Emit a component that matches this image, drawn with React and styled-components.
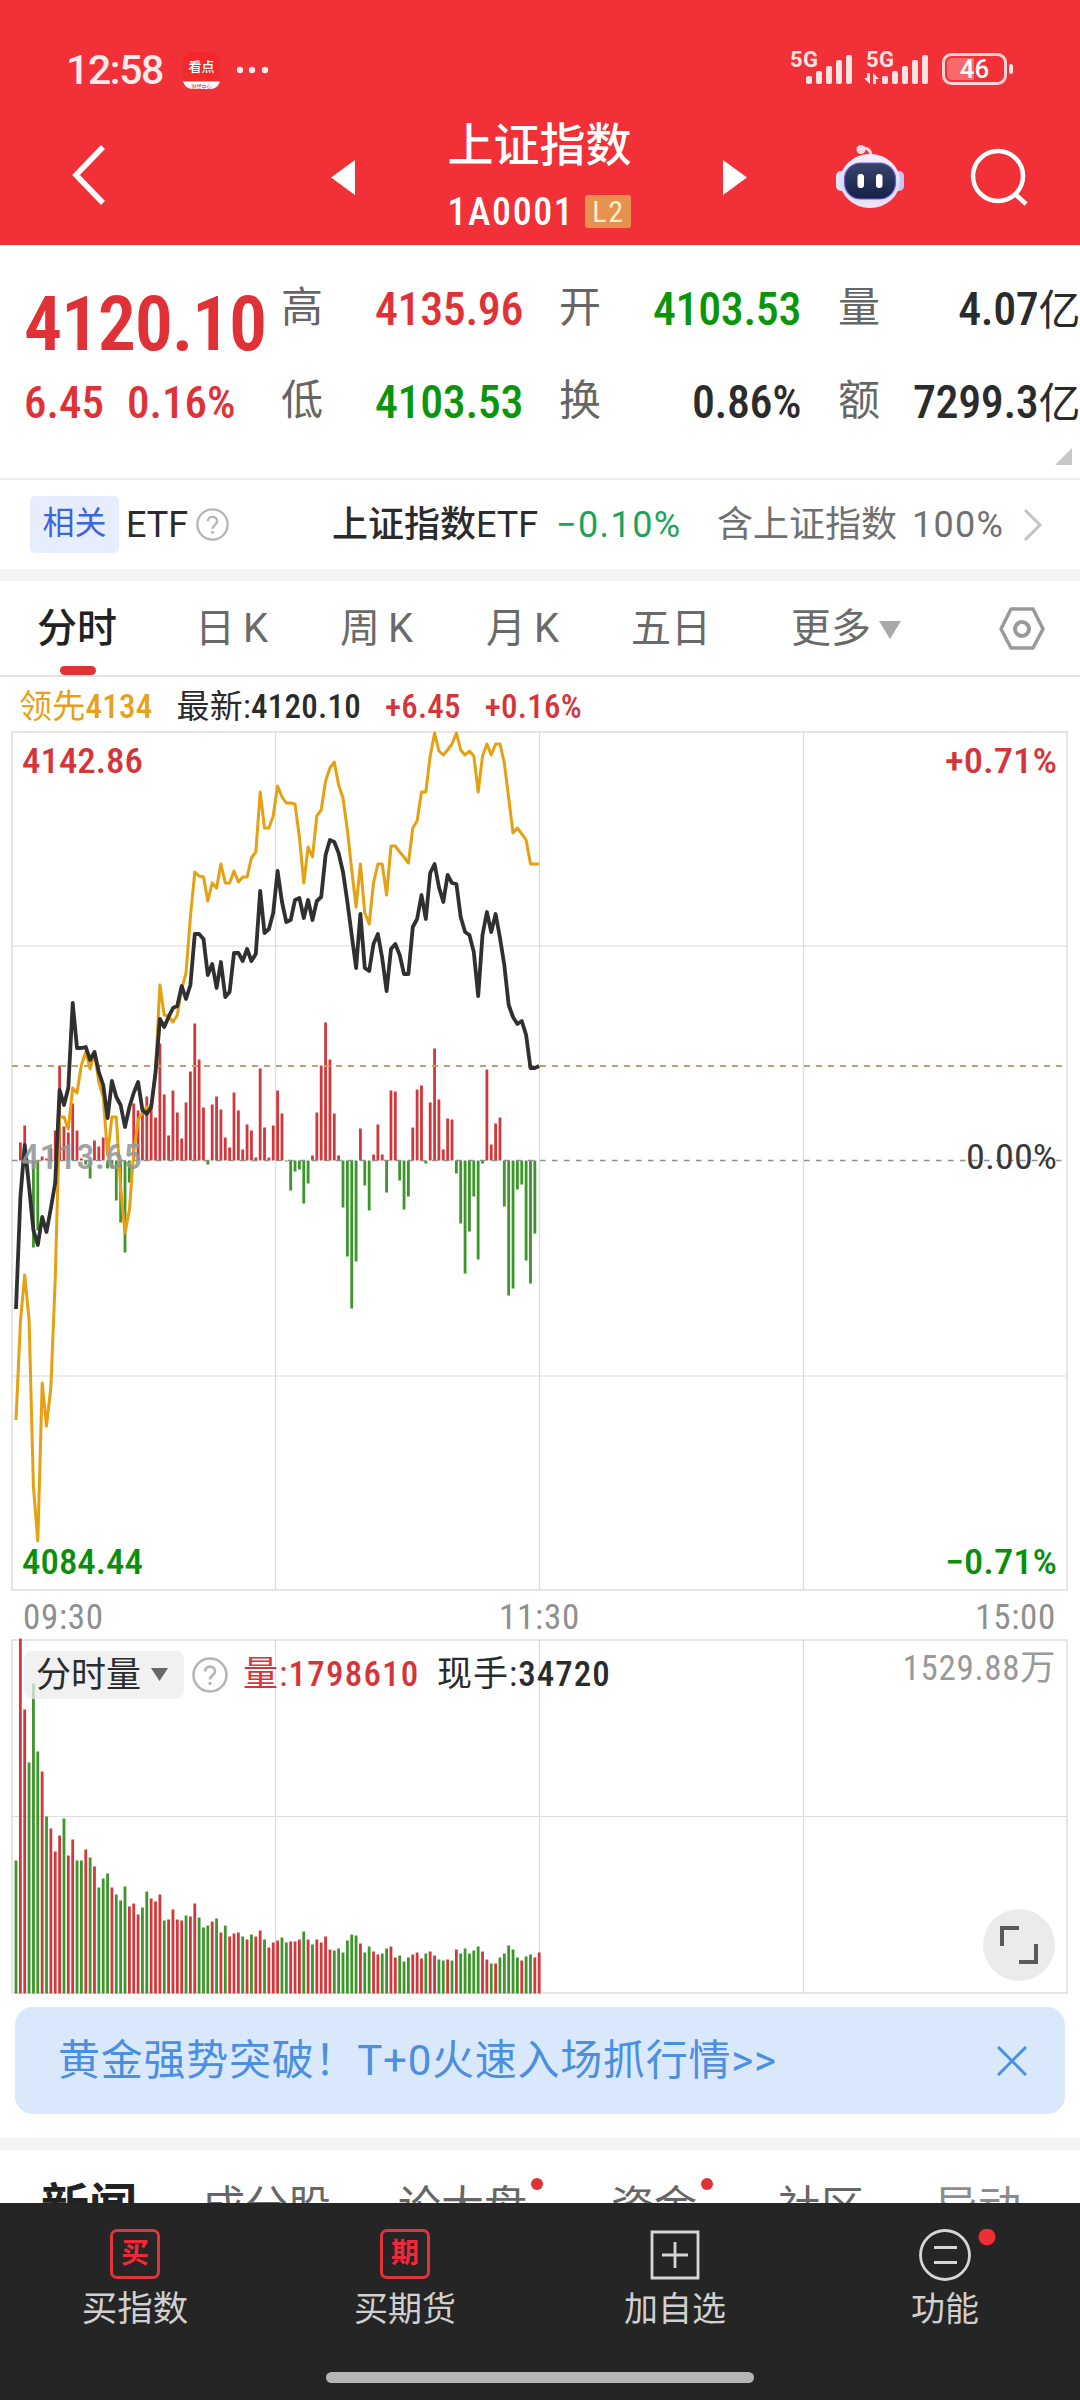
import React from "react";
import styled, { createGlobalStyle } from "styled-components";

const numFont = `"Roboto Condensed", Roboto, "Noto Sans CJK SC", sans-serif`;
const textFont = `Roboto, "Noto Sans CJK SC", sans-serif`;

const red = "#e03236";
const green = "#0a950a";

const GlobalStyle = createGlobalStyle`
  * {
    box-sizing: border-box;
  }
  body {
    margin: 0;
    background: #fff;
    font-family: ${textFont};
    color: #2b2b2b;
  }
  svg {
    display: block;
    flex: none;
  }
`;

const Screen = styled.main`
  width: 1080px;
  height: 2400px;
  overflow: hidden;
  display: flex;
  flex-direction: column;
  background: #fff;
  white-space: nowrap;
`;

/* ---------- top ---------- */

const StatusBar = styled.div`
  flex: none;
  height: 100px;
  padding: 41px 66px 0 66px;
  display: flex;
  align-items: flex-start;
  background: #f13037;
  color: #ffe9e9;
`;

const Clock = styled.span`
  width: 117px;
  font-size: 41px;
  font-weight: 500;
  line-height: 58px;
  letter-spacing: -1.4px;
`;

const AppBadge = styled.div`
  width: 37px;
  height: 37px;
  margin-top: 11px;
  border-radius: 9px;
  overflow: hidden;
  background: linear-gradient(#f5262c, #ee2f2c);
  display: flex;
  flex-direction: column;
  text-align: center;
  color: #fff;
  b {
    flex: 1;
    font-size: 13px;
    font-weight: 500;
    line-height: 29px;
  }
  small {
    height: 10px;
    border-top: 1px solid #f7b45a;
    background: #fff;
    color: #c33;
    font-size: 5px;
    line-height: 8px;
  }
`;

const StatusRight = styled.div`
  margin-left: auto;
`;

const NavBar = styled.header`
  flex: none;
  height: 145px;
  display: flex;
  align-items: flex-start;
  background: #f13037;
  color: #fff;
  padding-left: 70px;
`;

const NavIcon = styled.div`
  width: ${p => p.$w}px;
  padding-top: ${p => p.$top}px;
`;

const Title = styled.div`
  width: 339px;
  margin-right: 1px;
  text-align: center;
  h1 {
    margin: 15px 0 0;
    font-size: 46px;
    font-weight: 500;
    line-height: 60px;
  }
`;

const Code = styled.div`
  display: flex;
  justify-content: center;
  align-items: center;
  height: 73px;
  font-family: ${numFont};
  font-size: 38px;
  font-weight: 500;
  letter-spacing: 1.6px;
`;

const Level = styled.span`
  width: 46px;
  height: 33px;
  margin-left: 11px;
  border-radius: 3px;
  background: #e6914d;
  color: #fdf0c8;
  font-size: 30px;
  font-weight: 400;
  line-height: 34px;
  text-align: center;
`;

/* ---------- quote ---------- */

const Quote = styled.section`
  flex: none;
  height: 235px;
  padding-left: 24px;
  display: flex;
  border-bottom: 2px solid #ededed;
  position: relative;
`;

const PriceBox = styled.div`
  width: 257px;
  color: ${red};
  font-family: ${numFont};
`;

const Price = styled.div`
  height: 88px;
  margin-top: 35px;
  font-size: 76px;
  font-weight: 600;
  line-height: 88px;
  letter-spacing: -1.3px;
`;

const Change = styled.div`
  margin-top: 9px;
  height: 52px;
  font-size: 45px;
  font-weight: 500;
  line-height: 52px;
  display: flex;
  gap: 23px;
`;

const StatGrid = styled.dl`
  margin: 17px 0 0;
  display: grid;
  grid-template-columns: 42px 200px 78px 200px 79px 200px;
  grid-template-rows: 93px 93px;
  height: 186px;
  dt {
    font-size: 42px;
    line-height: 91px;
    color: #666;
    text-align: right;
  }
`;

const Stat = styled.dd`
  margin: 0;
  text-align: right;
  font-family: ${numFont};
  font-size: 46px;
  font-weight: 500;
  line-height: 95px;
  height: 93px;
  letter-spacing: -0.4px;
  color: ${p => p.$color || "#2b2b2b"};
  small {
    font-size: 42px;
    line-height: 0;
    font-weight: 400;
  }
`;

const ExpandMark = styled.i`
  position: absolute;
  right: 8px;
  top: 203px;
  border-left: 17px solid transparent;
  border-bottom: 17px solid #c8c8c8;
`;

const EtfRow = styled.div`
  flex: none;
  height: 89px;
  padding: 0 30px 0 30px;
  display: flex;
  align-items: center;
  font-size: 36px;
  line-height: 48px;
`;

const Tag = styled.span`
  width: 89px;
  height: 57px;
  border-radius: 5px;
  background: #e6edfc;
  color: #3b66dd;
  font-size: 32px;
  line-height: 55px;
  text-align: center;
`;

const EtfText = styled.span`
  width: ${p => p.$w}px;
  margin-left: ${p => p.$ml}px;
  color: ${p => p.$color || "#2b2b2b"};
  font-weight: ${p => p.$weight || 400};
  letter-spacing: ${p => p.$ls || 0}px;
  em {
    font-style: normal;
    font-weight: 400;
  }
`;

const Band = styled.div`
  flex: none;
  height: 12px;
  background: #f4f4f4;
`;

/* ---------- chart ---------- */

const Tabs = styled.nav`
  flex: none;
  height: 96px;
  padding-left: 37px;
  display: flex;
  border-bottom: 2px solid #e3e3e3;
`;

const Tab = styled.div`
  width: ${p => p.$w}px;
  height: 94px;
  display: flex;
  font-size: 40px;
  line-height: 96px;
  color: ${p => (p.$active ? "#222" : "#6a6a6a")};
  font-weight: ${p => (p.$active ? 500 : 400)};
  position: relative;
  span {
    margin-left: 8px;
  }
  &::after {
    content: "";
    display: ${p => (p.$active ? "block" : "none")};
    position: absolute;
    left: 23px;
    bottom: 0;
    width: 36px;
    height: 9px;
    border-radius: 5px;
    background: ${red};
  }
`;

const Legend = styled.div`
  flex: none;
  height: 53px;
  padding-left: 19px;
  display: flex;
  gap: 24px;
  font-family: ${numFont};
  font-size: 33px;
  font-weight: 500;
  line-height: 59px;
  letter-spacing: 0.25px;
`;

const Tone = styled.span`
  color: ${p => p.$color || "#2b2b2b"};
  b {
    font-weight: 400;
  }
`;

const AxisRow = styled.div`
  flex: none;
  height: 40px;
  padding: 0 24px 0 23px;
  display: flex;
  justify-content: space-between;
  font-family: ${numFont};
  font-size: 35px;
  line-height: 43px;
  letter-spacing: 0.7px;
  color: #8f8f8f;
`;

const VolumePanel = styled.section`
  flex: none;
  height: 361px;
  position: relative;
`;

const VolumeTools = styled.div`
  position: absolute;
  inset: 15px 24px auto 24px;
  height: 48px;
  display: flex;
  align-items: center;
  font-family: ${numFont};
  font-size: 35px;
`;

const Picker = styled.div`
  width: 160px;
  height: 48px;
  padding-left: 12px;
  display: flex;
  align-items: center;
  gap: 9px;
  border-radius: 8px;
  background: rgba(236, 236, 236, 0.75);
  margin-right: 8px;
  line-height: 47px;
`;

const VolumeText = styled.span`
  width: ${p => p.$w}px;
  margin-left: ${p => p.$ml}px;
  color: ${p => p.$color || "#2b2b2b"};
  height: 48px;
  line-height: 47px;
  font-weight: 500;
  letter-spacing: ${p => p.$ls}px;
  b {
    font-weight: 400;
  }
`;

const VolumeMax = styled.span`
  height: 48px;
  line-height: 36px;
  margin-left: auto;
  letter-spacing: 0.7px;
  color: #999;
`;

const FullButton = styled.button`
  position: absolute;
  right: 25px;
  bottom: 16px;
  width: 72px;
  height: 72px;
  padding: 0;
  border: 0;
  border-radius: 50%;
  background: #ebebeb;
  display: grid;
  place-items: center;
`;

/* ---------- bottom ---------- */

const Banner = styled.div`
  flex: none;
  height: 107px;
  margin: 10px 15px 24px;
  padding: 0 38px 0 43px;
  display: flex;
  align-items: center;
  justify-content: space-between;
  border-radius: 18px;
  background: #dae8fb;
  color: #4a8fe0;
  font-size: 42px;
  letter-spacing: 0.75px;
  span {
    padding-bottom: 8px;
  }
`;

const NewsTabs = styled.nav`
  flex: none;
  height: 53px;
  overflow: hidden;
  padding-left: 41px;
  display: flex;
`;

const NewsTab = styled.div`
  width: ${p => p.$w}px;
  font-size: ${p => (p.$active ? 48 : 43)}px;
  font-weight: ${p => (p.$active ? 700 : 400)};
  color: ${p => (p.$active ? "#222" : "#666")};
  opacity: ${p => (p.$fade ? 0.75 : 1)};
  line-height: 114px;
  height: 114px;
`;

const Dotted = styled.span`
  display: inline-block;
  position: relative;
  &::after {
    content: "";
    position: absolute;
    right: -16px;
    top: 28px;
    width: 12px;
    height: 12px;
    border-radius: 50%;
    background: ${red};
  }
`;

const BottomBar = styled.footer`
  flex: 1;
  background: #252525;
  color: #d0d0d0;
  display: flex;
  flex-direction: column;
  align-items: center;
`;

const Actions = styled.div`
  width: 1080px;
  height: 169px;
  display: grid;
  grid-template-columns: repeat(4, 1fr);
`;

const Action = styled.div`
  display: flex;
  flex-direction: column;
  align-items: center;
  padding-top: 26px;
  font-size: ${p => p.$size || 34}px;
  line-height: 56px;
`;

const RedGlyph = styled.div`
  width: 50px;
  height: 50px;
  border: 3px solid #e0333a;
  border-radius: 7px;
  color: #f0283a;
  font-size: 28px;
  font-weight: 700;
  line-height: 44px;
  text-align: center;
  margin-bottom: 2px;
`;

const HomeBar = styled.div`
  width: 428px;
  height: 11px;
  border-radius: 6px;
  background: #b5b5b5;
`;

/* ---------- data ---------- */

const STEP = 4.36;
const FIRST_X = 16;
const ZERO_Y = 1160.5;
const VOL_BASE = 1993.5;

const price = [
  1309, 1197, 1145, 1187, 1230, 1245, 1217, 1232, 1208, 1183, 1090, 1105, 1088,
  1003, 1048, 1048, 1047, 1060, 1052, 1072, 1085, 1118, 1081, 1097, 1105, 1127,
  1107, 1093, 1082, 1110, 1114, 1107, 1073, 1019, 1027, 1017, 1008, 1006, 986,
  999, 985, 934, 934, 939, 975, 964, 988, 962, 997, 992, 953, 953, 961, 949,
  961, 954, 891, 933, 929, 913, 871, 902, 922, 920, 900, 898, 918, 900, 920,
  901, 897, 855, 840, 842, 853, 872, 902, 935, 968, 914, 968, 971, 944, 934,
  958, 991, 949, 944, 955, 974, 974, 927, 919, 895, 919, 873, 864, 887, 902,
  875, 883, 884, 917, 932, 935, 952, 996, 935, 912, 932, 914, 938, 965, 1005,
  1017, 1024, 1021, 1035, 1068, 1068, 1066
];

const lead = [
  1420, 1322, 1275, 1320, 1487, 1541, 1383, 1426, 1387, 1280, 1117, 1117, 1129,
  1088, 1093, 1065, 1052, 1069, 1053, 1082, 1097, 1155, 1117, 1117, 1187, 1233,
  1210, 1153, 1120, 1113, 1107, 1108, 1070, 985, 1015, 1016, 1022, 1015, 989,
  973, 917, 872, 876, 877, 901, 883, 888, 864, 883, 883, 871, 882, 877, 877,
  858, 852, 792, 828, 828, 816, 786, 797, 803, 803, 804, 837, 883, 847, 857,
  816, 810, 781, 768, 762, 785, 798, 830, 870, 907, 864, 913, 924, 883, 864,
  864, 895, 846, 846, 852, 857, 863, 828, 821, 792, 792, 756, 733, 751, 755,
  750, 744, 733, 750, 755, 751, 756, 792, 756, 744, 755, 744, 744, 763, 798,
  833, 828, 834, 840, 864, 864, 864
];

const momentum = [
  0, 18, 35, 0, -87, -70, 4, 2, 12, 30, 95, 34, 28, 57, 30, 2, -4, -18, 20, 14,
  23, -8, -8, -40, -62, -92, -22, 57, 50, 52, 64, 57, 43, 117, 66, 25, 70, 48,
  22, 58, 89, 137, 101, 53, -4, 56, 64, 51, 23, 13, 68, 50, 11, 36, 30, 3, 92,
  33, 3, 35, 70, 47, -1, -30, -11, -9, -43, -23, 5, 48, 95, 138, 101, 47, 5,
  -47, -96, -148, -101, 32, -25, -50, 6, 36, 6, -32, 70, 69, -20, -49, -36, 33,
  71, 75, -3, 58, 112, 61, 11, 42, 41, -13, -63, -113, -71, -36, -99, -3, 91,
  16, 37, 43, -46, -135, -128, -29, -24, -100, -123, -73, 0
];

// negative = falling minute
const volume = [
  -133, 355, 284, -231, -310, -242, 222, -177, 165, 142, 158, -175, 138, 154,
  -133, -133, 144, -136, 127, -106, -115, -120, 106, -99, -93, -107, 87, 90, 79,
  -86, -102, 95, 92, 99, -73, 74, 84, 74, 73, -78, 77, 90, -76, -66, -68, 72,
  -75, 61, -68, 57, 60, 61, -57, 54, -59, 57, 63, -54, 46, 51, 53, -56, -51, 52,
  52, 54, -62, 54, -49, 54, 51, 57, 44, -43, -45, -41, -53, -59, -58, 50, -41,
  -47, 42, 39, -40, -45, 47, 36, -38, -32, -36, 39, 41, 35, -40, 42, 38, -34,
  -33, 34, -33, 44, -40, -45, -40, -43, -47, 42, 34, -30, 30, -36, -40, -48,
  -44, -36, 33, -37, -39, 36, 41
];

const stats = [
  ["高", "4135.96", "", red],
  ["开", "4103.53", "", green],
  ["量", "4.07", "亿"],
  ["低", "4103.53", "", green],
  ["换", "0.86%", ""],
  ["额", "7299.3", "亿"]
];

const xAt = i => FIRST_X + i * STEP;
const toPoints = series => series.map((y, i) => `${xAt(i).toFixed(1)},${y}`).join(" ");

/* ---------- drawings ---------- */

const Signal = ({ x }) =>
  [8, 13, 18, 24, 29].map((h, i) => (
    <rect key={i} x={x + i * 10} y={43 - h} width="6" height={h} rx="2" />
  ));

const StatusIcons = () => (
  <svg width="226" height="48" viewBox="0 0 226 48" fill="#ffe3e3">
    <g fontFamily="Roboto" fontWeight="700" fontSize="22">
      <text x="2" y="26" textLength="28">5G</text>
      <text x="78" y="26" textLength="28">5G</text>
    </g>
    <Signal x={18} />
    <Signal x={94} />
    <path d="M82 32v11l-6-6h3v-5zM85 43V32l6 6h-3v5z" />
    <rect x="155.500" y="13.500" width="62" height="29" rx="8" fill="none" stroke="#ffd3d3" strokeWidth="3" />
    <path d="M164 17h22v22h-22a5 5 0 0 1-5-5V22a5 5 0 0 1 5-5z" fill="#f8696c" />
    <rect x="221" y="23" width="4" height="10" rx="2" />
    <text x="186.500" y="37" fontFamily="Roboto" fontSize="26" fontWeight="500" textAnchor="middle" fill="#fff">46</text>
  </svg>
);

const Robot = () => (
  <svg width="70" height="66" viewBox="0 0 70 66">
    <defs>
      <linearGradient id="shell" x1="0" y1="0" x2="0" y2="1">
        <stop offset="0" stopColor="#f6eefb" />
        <stop offset="0.6" stopColor="#dcdcfa" />
        <stop offset="1" stopColor="#efe4f3" />
      </linearGradient>
      <linearGradient id="visor" x1="0" y1="0" x2="0" y2="1">
        <stop offset="0" stopColor="#37446b" />
        <stop offset="1" stopColor="#16204a" />
      </linearGradient>
    </defs>
    <path d="M26 6c6-2 10 1 10 7" fill="none" stroke="#f7dfe8" strokeWidth="3" />
    <circle cx="26" cy="6.500" r="4.500" fill="#fbd9e2" />
    <rect x="1" y="28" width="10" height="20" rx="5" fill="#dfe2fb" />
    <rect x="59" y="28" width="10" height="20" rx="5" fill="#c9c6f6" />
    <ellipse cx="35" cy="38" rx="30" ry="27" fill="url(#shell)" />
    <rect x="9.500" y="20" width="51" height="36" rx="16" fill="url(#visor)" stroke="#6d5fc9" strokeWidth="1.200" />
    <rect x="22.500" y="31" width="6.500" height="14" rx="3" fill="#fff" />
    <rect x="41" y="31" width="6.500" height="14" rx="3" fill="#fff" />
  </svg>
);

const Help = ({ size }) => (
  <svg width={size} height={size} viewBox="0 0 36 36" fill="none" stroke="#b5b5b5" strokeWidth="2.500">
    <circle cx="18" cy="18" r="16.500" />
    <path d="M13 14.500c0-6.500 10-6.500 10 0 0 4-5 3.800-5 8" strokeWidth="2.600" />
    <circle cx="18" cy="26.500" r="1.700" fill="#b5b5b5" stroke="none" />
  </svg>
);

const ChartText = ({ x, y, w, color, end, weight = 500, children }) => (
  <text
    x={end ? x - w : x}
    y={y}
    textLength={w}
    lengthAdjust="spacingAndGlyphs"
    fontFamily={numFont}
    fontSize="35"
    fontWeight={weight}
    fill={color}
  >
    {children}
  </text>
);

const PriceChart = () => (
  <svg width="1080" height="866" viewBox="0 730 1080 866">
    <g fill="none" stroke="#e6e6e6" strokeWidth="2">
      <rect x="12" y="732" width="1055" height="858" />
      <path d="M12 946H1067M12 1376H1067" strokeWidth="1.500" />
      <path d="M275.500 732V1590M539.500 732V1590M803.500 732V1590" stroke="#dcdcdc" strokeWidth="1.200" />
    </g>
    {momentum.map((v, i) => (
      <rect
        key={i}
        x={xAt(i) - 1.4}
        y={v > 0 ? ZERO_Y - v : ZERO_Y}
        width="2.800"
        height={Math.abs(v)}
        fill={v > 0 ? "#d2383b" : "#3c962a"}
      />
    ))}
    <path d="M12 1066H1067" stroke="#b5a375" strokeWidth="1.800" strokeDasharray="6 6" />
    <path d="M12 1160.500H1067" stroke="#8f8f8f" strokeWidth="1.500" strokeDasharray="5.500 6.500" />
    <polyline points={toPoints(lead)} fill="none" stroke="#e6a011" strokeWidth="3" strokeLinejoin="round" />
    <polyline points={toPoints(price)} fill="none" stroke="#303030" strokeWidth="3.800" strokeLinejoin="round" />
    <ChartText x={22} y={773} w={121} color="#d5353a">4142.86</ChartText>
    <ChartText x={1057} y={773} w={112} color="#d5353a" end>+0.71%</ChartText>
    <ChartText x={21} y={1169} w={121} color="rgba(150,150,150,0.9)">4113.65</ChartText>
    <ChartText x={1057} y={1169} w={91} color="#3a3a3a" weight={400} end>0.00%</ChartText>
    <ChartText x={22} y={1574} w={121} color="#0a8f0a">4084.44</ChartText>
    <ChartText x={1057} y={1574} w={112} color="#0a8f0a" end>−0.71%</ChartText>
  </svg>
);

const VolumeChart = () => (
  <svg width="1080" height="361" viewBox="0 1636 1080 361">
    <g fill="none" stroke="#e6e6e6" strokeWidth="2">
      <rect x="12" y="1640" width="1055" height="353" />
      <path d="M12 1816.500H1067" stroke="#dcdcdc" strokeWidth="1.200" />
      <path d="M275.500 1640V1993M539.500 1640V1993M803.500 1640V1993" stroke="#dcdcdc" strokeWidth="1.200" />
    </g>
    {volume.map((v, i) => (
      <rect
        key={i}
        x={xAt(i) - 1.4}
        y={VOL_BASE - Math.abs(v)}
        width="2.800"
        height={Math.abs(v)}
        fill={v > 0 ? "#d2383b" : "#3c962a"}
      />
    ))}
  </svg>
);

/* ---------- page ---------- */

export default function App() {
  return (
    <Screen>
      <GlobalStyle />
      <StatusBar>
        <Clock>12:58</Clock>
        <AppBadge>
          <b>看点</b>
          <small>财经中心</small>
        </AppBadge>
        <svg width="60" height="58" viewBox="0 0 60 58" fill="#ffe9e9">
          <circle cx="20" cy="29" r="3.200" />
          <circle cx="32" cy="29" r="3.200" />
          <circle cx="45" cy="29" r="3.200" />
        </svg>
        <StatusRight>
          <StatusIcons />
        </StatusRight>
      </StatusBar>

      <NavBar>
        <NavIcon $w={260} $top={44}>
          <svg width="38" height="62" viewBox="0 0 38 62" fill="none" stroke="#fff" strokeWidth="5.500">
            <path d="M33 3L6 31l27 28" />
          </svg>
        </NavIcon>
        <NavIcon $w={40} $top={60}>
          <svg width="26" height="36" fill="#fff">
            <path d="M25 0v35L1 17.500z" />
          </svg>
        </NavIcon>
        <Title>
          <h1>上证指数</h1>
          <Code>
            1A0001<Level>L2</Level>
          </Code>
        </Title>
        <NavIcon $w={125} $top={60}>
          <svg width="40" height="36" fill="#fff">
            <path d="M13 0v35l24-17.500z" />
          </svg>
        </NavIcon>
        <NavIcon $w={134} $top={43}>
          <Robot />
        </NavIcon>
        <NavIcon $w={60} $top={47}>
          <svg width="60" height="60" viewBox="0 0 60 60" fill="none" stroke="#fff" strokeWidth="4.500">
            <circle cx="29" cy="29" r="25" />
            <path d="M46 47l11 10" />
          </svg>
        </NavIcon>
      </NavBar>

      <Quote>
        <PriceBox>
          <Price>4120.10</Price>
          <Change>
            <span>6.45</span>
            <span>0.16%</span>
          </Change>
        </PriceBox>
        <StatGrid>
          {stats.map(([name, value, unit, color]) => (
            <React.Fragment key={name}>
              <dt>{name}</dt>
              <Stat $color={color}>
                {value}
                {unit && <small>{unit}</small>}
              </Stat>
            </React.Fragment>
          ))}
        </StatGrid>
        <ExpandMark />
      </Quote>

      <EtfRow>
        <Tag>相关</Tag>
        <EtfText $w={62} $ml={7}>ETF</EtfText>
        <EtfText $w={34} $ml={8}>
          <Help size={33} />
        </EtfText>
        <EtfText $w={206} $ml={102} $weight={500}>
          上证指数<em>ETF</em>
        </EtfText>
        <EtfText $w={124} $ml={18} $color="#1aa457" $ls={1.4}>−0.10%</EtfText>
        <EtfText $w={180} $ml={37} $color="#707070">含上证指数</EtfText>
        <EtfText $w={109} $ml={15} $color="#707070" $ls={1.3}>100%</EtfText>
        <svg width="24" height="36" viewBox="0 0 24 36" fill="none" stroke="#c4c4c4" strokeWidth="3">
          <path d="M4 3l15 15L4 33" />
        </svg>
      </EtfRow>
      <Band />

      <Tabs>
        <Tab $w={158} $active>分时</Tab>
        <Tab $w={145}>日<span>K</span></Tab>
        <Tab $w={146}>周<span>K</span></Tab>
        <Tab $w={145}>月<span>K</span></Tab>
        <Tab $w={160}>五日</Tab>
        <Tab $w={208}>
          更多
          <svg width="32" height="94" fill="#a8a8a8">
            <path d="M8 40h22l-11 18z" />
          </svg>
        </Tab>
        <svg width="46" height="94" viewBox="0 0 46 94" fill="none" stroke="#999" strokeWidth="3.500" strokeLinejoin="round">
          <path d="M12 28h22l10 20-10 19H12L2 48z" />
          <circle cx="23" cy="48" r="7" strokeWidth="4" />
        </svg>
      </Tabs>

      <Legend>
        <Tone $color="#e5a11b"><b>领先</b>4134</Tone>
        <Tone><b>最新:</b>4120.10</Tone>
        <Tone $color="#d5353a">+6.45</Tone>
        <Tone $color="#d5353a">+0.16%</Tone>
      </Legend>
      <PriceChart />
      <AxisRow>
        <span>09:30</span>
        <span>11:30</span>
        <span>15:00</span>
      </AxisRow>
      <VolumePanel>
        <VolumeChart />
        <VolumeTools>
          <Picker>
            分时量
            <svg width="20" height="14" fill="#666">
              <path d="M1 0h17l-8.500 13z" />
            </svg>
          </Picker>
          <Help size={36} />
          <VolumeText $w={178} $ml={15} $ls={1.2} $color="#d5353a"><b>量:</b>1798610</VolumeText>
          <VolumeText $w={180} $ml={16} $ls={1}><b>现手:</b>34720</VolumeText>
          <VolumeMax>1529.88万</VolumeMax>
        </VolumeTools>
        <FullButton>
          <svg width="40" height="40" fill="none" stroke="#5a5a5a" strokeWidth="4">
            <path d="M3 21V3h17M37 19v18H20" />
          </svg>
        </FullButton>
      </VolumePanel>

      <Banner>
        <span>黄金强势突破！T+0火速入场抓行情&gt;&gt;</span>
        <svg width="30" height="30" fill="none" stroke="#4a8fe0" strokeWidth="3">
          <path d="M1 1l28 28M29 1L1 29" />
        </svg>
      </Banner>
      <Band />

      <NewsTabs>
        <NewsTab $w={161} $active>新闻</NewsTab>
        <NewsTab $w={196}>成分股</NewsTab>
        <NewsTab $w={213}>
          <Dotted>论大盘</Dotted>
        </NewsTab>
        <NewsTab $w={167}>
          <Dotted>资金</Dotted>
        </NewsTab>
        <NewsTab $w={157}>社区</NewsTab>
        <NewsTab $w={100} $fade>异动</NewsTab>
      </NewsTabs>

      <BottomBar>
        <Actions>
          <Action $size={35.5}>
            <RedGlyph>买</RedGlyph>
            买指数
          </Action>
          <Action>
            <RedGlyph>期</RedGlyph>
            买期货
          </Action>
          <Action>
            <svg width="52" height="52" fill="none" stroke="#d6d6d6" strokeWidth="2.800">
              <path d="M3 3h46v46H3zM26 13v26M13 26h26" />
            </svg>
            加自选
          </Action>
          <Action>
            <svg width="110" height="52" fill="none" stroke="#d6d6d6" strokeWidth="2.800">
              <circle cx="55" cy="26" r="24.500" />
              <path d="M44 18.500h23M44 33.500h23" />
              <circle cx="97" cy="8" r="8.500" fill="#ee3035" stroke="none" />
            </svg>
            功能
          </Action>
        </Actions>
        <HomeBar />
      </BottomBar>
    </Screen>
  );
}
